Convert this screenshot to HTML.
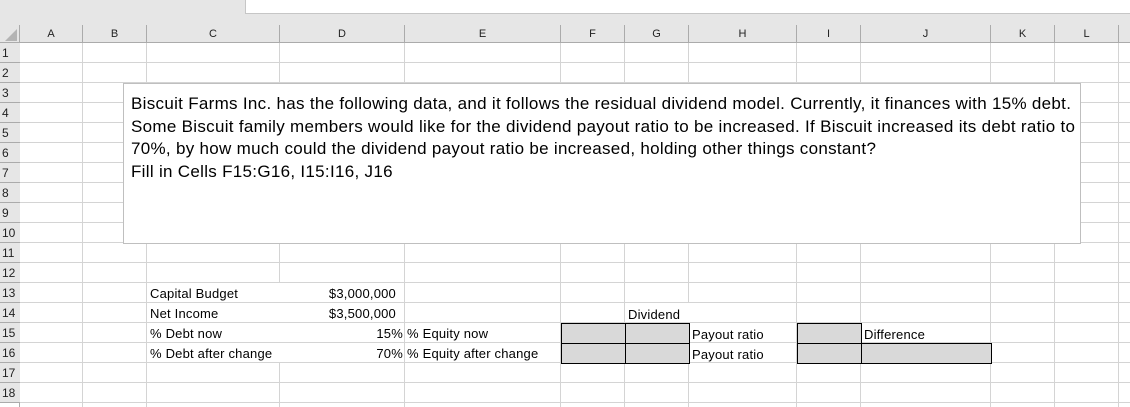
<!DOCTYPE html>
<html><head><meta charset="utf-8"><style>
body{margin:0;width:1130px;height:407px;overflow:hidden;background:#fff;font-family:"Liberation Sans",Calibri,sans-serif;position:relative}
.a{position:absolute}
.vl{position:absolute;width:1px;background:#d4d4d4;top:43px;height:364px}
.hl{position:absolute;height:1px;background:#d4d4d4;left:20px;width:1110px}
.ch{position:absolute;top:25px;height:18px;font-size:11px;line-height:18px;text-align:center;color:#222;border-right:1px solid #ababab;box-sizing:border-box}
.rh{position:absolute;left:0;width:20px;height:20px;font-size:12px;line-height:21px;padding-left:2px;box-sizing:border-box;color:#222;border-bottom:1px solid #ababab;background:#e6e6e6}
.t{position:absolute;font-size:13px;letter-spacing:0.2px;line-height:20px;color:#000;white-space:nowrap;background:#fff}
.g{position:absolute;background:#d9d9d9;border:1px solid #000;box-sizing:border-box}
</style></head><body>
<div class="a" style="left:0;top:0;width:1130px;height:43px;background:#e6e6e6"></div>
<div class="a" style="left:245px;top:0;width:885px;height:13px;background:#fff;border-left:1px solid #c6c6c6;border-bottom:1px solid #c6c6c6"></div>
<div class="a" style="left:0;top:42px;width:1130px;height:1px;background:#ababab"></div>
<div class="a" style="left:19px;top:25px;width:1px;height:382px;background:#ababab"></div>
<svg class="a" style="left:5px;top:29px" width="12" height="12"><polygon points="12,0 12,12 0,12" fill="#b4b4b4"/></svg>
<div class="ch" style="left:20px;width:63px">A</div>
<div class="ch" style="left:83px;width:64px">B</div>
<div class="ch" style="left:147px;width:133px">C</div>
<div class="ch" style="left:280px;width:125px">D</div>
<div class="ch" style="left:405px;width:156px">E</div>
<div class="ch" style="left:561px;width:64px">F</div>
<div class="ch" style="left:625px;width:64px">G</div>
<div class="ch" style="left:689px;width:108px">H</div>
<div class="ch" style="left:797px;width:64px">I</div>
<div class="ch" style="left:861px;width:130px">J</div>
<div class="ch" style="left:991px;width:64px">K</div>
<div class="ch" style="left:1055px;width:64px">L</div>
<div class="rh" style="top:43px">1</div><div class="rh" style="top:63px">2</div><div class="rh" style="top:83px">3</div><div class="rh" style="top:103px">4</div><div class="rh" style="top:123px">5</div><div class="rh" style="top:143px">6</div><div class="rh" style="top:163px">7</div><div class="rh" style="top:183px">8</div><div class="rh" style="top:203px">9</div><div class="rh" style="top:223px">10</div><div class="rh" style="top:243px">11</div><div class="rh" style="top:263px">12</div><div class="rh" style="top:283px">13</div><div class="rh" style="top:303px">14</div><div class="rh" style="top:323px">15</div><div class="rh" style="top:343px">16</div><div class="rh" style="top:363px">17</div><div class="rh" style="top:383px">18</div>
<div class="vl" style="left:82px"></div><div class="vl" style="left:146px"></div><div class="vl" style="left:279px"></div><div class="vl" style="left:404px"></div><div class="vl" style="left:560px"></div><div class="vl" style="left:624px"></div><div class="vl" style="left:688px"></div><div class="vl" style="left:796px"></div><div class="vl" style="left:860px"></div><div class="vl" style="left:990px"></div><div class="vl" style="left:1054px"></div><div class="vl" style="left:1118px"></div>
<div class="hl" style="top:62px"></div><div class="hl" style="top:82px"></div><div class="hl" style="top:102px"></div><div class="hl" style="top:122px"></div><div class="hl" style="top:142px"></div><div class="hl" style="top:162px"></div><div class="hl" style="top:182px"></div><div class="hl" style="top:202px"></div><div class="hl" style="top:222px"></div><div class="hl" style="top:242px"></div><div class="hl" style="top:262px"></div><div class="hl" style="top:282px"></div><div class="hl" style="top:302px"></div><div class="hl" style="top:322px"></div><div class="hl" style="top:342px"></div><div class="hl" style="top:362px"></div><div class="hl" style="top:382px"></div><div class="hl" style="top:402px"></div>
<div class="a" style="left:123px;top:83px;width:958px;height:161px;background:#fff;border:1px solid #bfbfbf;box-sizing:border-box;padding:9px 0 0 7px;font-size:17px;letter-spacing:0.3px;line-height:22.5px;color:#000;white-space:nowrap">Biscuit Farms Inc. has the following data, and it follows the residual dividend model. Currently, it finances with 15% debt.<br>Some Biscuit family members would like for the dividend payout ratio to be increased. If Biscuit increased its debt ratio to<br>70%, by how much could the dividend payout ratio be increased, holding other things constant?<br>Fill in Cells F15:G16, I15:I16, J16</div>
<div class="t" style="left:148px;top:283px;width:131px;padding-left:2px;height:19px;line-height:22px">Capital Budget</div>
<div class="t" style="left:148px;top:303px;width:131px;padding-left:2px;height:19px;line-height:22px">Net Income</div>
<div class="t" style="left:148px;top:323px;width:131px;padding-left:2px;height:19px;line-height:22px">% Debt now</div>
<div class="t" style="left:148px;top:343px;width:140px;padding-left:2px;height:19px;line-height:22px">% Debt after change</div>
<div class="t" style="left:290px;top:283px;width:106px;text-align:right;height:19px;line-height:22px">$3,000,000</div>
<div class="t" style="left:290px;top:303px;width:106px;text-align:right;height:19px;line-height:22px">$3,500,000</div>
<div class="t" style="left:290px;top:323px;width:113px;text-align:right;height:19px;line-height:22px">15%</div>
<div class="t" style="left:290px;top:343px;width:113px;text-align:right;height:19px;line-height:22px">70%</div>
<div class="t" style="left:406px;top:323px;height:19px;line-height:22px;padding-left:1px">% Equity now</div>
<div class="t" style="left:406px;top:343px;height:19px;line-height:22px;padding-left:1px">% Equity after change</div>
<div class="t" style="left:626px;top:303px;width:62px;height:19px;line-height:23px;padding-left:2px">Dividend</div>
<div class="g" style="left:561px;top:323px;width:65px;height:21px"></div>
<div class="g" style="left:625px;top:323px;width:65px;height:21px"></div>
<div class="g" style="left:561px;top:343px;width:65px;height:21px"></div>
<div class="g" style="left:625px;top:343px;width:65px;height:21px"></div>
<div class="t" style="left:691px;top:324px;background:none;line-height:21px;padding-left:1px">Payout ratio</div>
<div class="t" style="left:691px;top:344px;background:none;line-height:21px;padding-left:1px">Payout ratio</div>
<div class="g" style="left:797px;top:323px;width:65px;height:21px"></div>
<div class="g" style="left:797px;top:343px;width:65px;height:21px"></div>
<div class="g" style="left:861px;top:343px;width:131px;height:21px"></div>
<div class="t" style="left:864px;top:324px;background:none;line-height:21px">Difference</div>
</body></html>
